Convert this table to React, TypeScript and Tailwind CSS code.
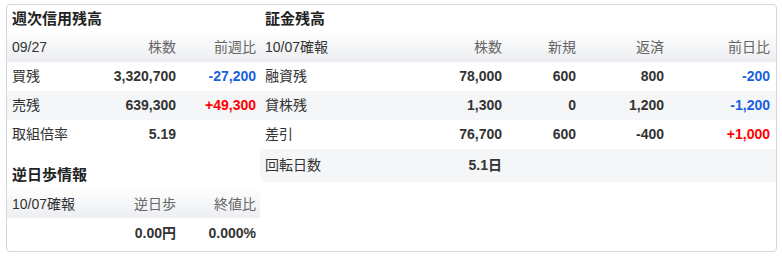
import React from "react";

const font = { fontFamily: '"Liberation Sans", Arial, "Noto Sans CJK JP", sans-serif' };

const hdr = "bg-gradient-to-b from-[#fdfdfd] to-[#eceef1]";

function Blue({ v }: { v: string }) {
  return <span className="text-[#1a5fe0]">{v}</span>;
}
function Red({ v }: { v: string }) {
  return <span className="text-[#ff0000]">{v}</span>;
}

export default function App() {
  const leftCols = "grid grid-cols-[84px_80px_80px] items-center pl-[5px] pr-[4px]";
  const rightCols = "grid grid-cols-[120px_117px_74px_88px_106px] items-center pl-[5px] pr-[5px]";
  return (
    <div className="w-[782px] h-[257px] bg-white pt-[4px] pl-[6px] text-[14px] text-[#333]" style={font}>
      <div className="w-[771px] h-[248px] border border-[#d4d7dc] rounded-[4px] flex overflow-hidden">
        {/* Left column */}
        <div className="w-[253px] flex flex-col">
          <div className="h-[28px] flex items-center pl-[5px] text-[15px] font-bold text-[#222]">週次信用残高</div>
          <div className={`${leftCols} h-[29px] ${hdr}`}>
            <div className="text-[#333]">09/27</div>
            <div className="text-right text-[#666]">株数</div>
            <div className="text-right text-[#666]">前週比</div>
          </div>
          <div className={`${leftCols} h-[29px] bg-white`}>
            <div>買残</div>
            <div className="text-right font-bold">3,320,700</div>
            <div className="text-right font-bold"><Blue v="-27,200" /></div>
          </div>
          <div className={`${leftCols} h-[29px] bg-[#f5f6f8]`}>
            <div>売残</div>
            <div className="text-right font-bold">639,300</div>
            <div className="text-right font-bold"><Red v="+49,300" /></div>
          </div>
          <div className={`${leftCols} h-[29px] bg-white`}>
            <div>取組倍率</div>
            <div className="text-right font-bold">5.19</div>
            <div></div>
          </div>
          <div className="mt-[11px] h-[30px] flex items-center pl-[5px] text-[15px] font-bold text-[#222]">逆日歩情報</div>
          <div className={`${leftCols} h-[28px] ${hdr}`}>
            <div className="text-[#333]">10/07確報</div>
            <div className="text-right text-[#666]">逆日歩</div>
            <div className="text-right text-[#666]">終値比</div>
          </div>
          <div className={`${leftCols} h-[30px] bg-white`}>
            <div></div>
            <div className="text-right font-bold">0.00円</div>
            <div className="text-right font-bold">0.000%</div>
          </div>
        </div>
        {/* Right column */}
        <div className="flex-1 flex flex-col">
          <div className="h-[28px] flex items-center pl-[5px] text-[15px] font-bold text-[#222]">証金残高</div>
          <div className={`${rightCols} h-[29px] ${hdr}`}>
            <div className="text-[#333]">10/07確報</div>
            <div className="text-right text-[#666]">株数</div>
            <div className="text-right text-[#666]">新規</div>
            <div className="text-right text-[#666]">返済</div>
            <div className="text-right text-[#666]">前日比</div>
          </div>
          <div className={`${rightCols} h-[29px] bg-white`}>
            <div>融資残</div>
            <div className="text-right font-bold">78,000</div>
            <div className="text-right font-bold">600</div>
            <div className="text-right font-bold">800</div>
            <div className="text-right font-bold"><Blue v="-200" /></div>
          </div>
          <div className={`${rightCols} h-[29px] bg-[#f5f6f8]`}>
            <div>貸株残</div>
            <div className="text-right font-bold">1,300</div>
            <div className="text-right font-bold">0</div>
            <div className="text-right font-bold">1,200</div>
            <div className="text-right font-bold"><Blue v="-1,200" /></div>
          </div>
          <div className={`${rightCols} h-[29px] bg-white`}>
            <div>差引</div>
            <div className="text-right font-bold">76,700</div>
            <div className="text-right font-bold">600</div>
            <div className="text-right font-bold">-400</div>
            <div className="text-right font-bold"><Red v="+1,000" /></div>
          </div>
          <div className={`${rightCols} h-[33px] bg-[#f5f6f8] rounded-bl-[6px]`}>
            <div>回転日数</div>
            <div className="text-right font-bold">5.1日</div>
            <div></div>
            <div></div>
            <div></div>
          </div>
        </div>
      </div>
    </div>
  );
}
